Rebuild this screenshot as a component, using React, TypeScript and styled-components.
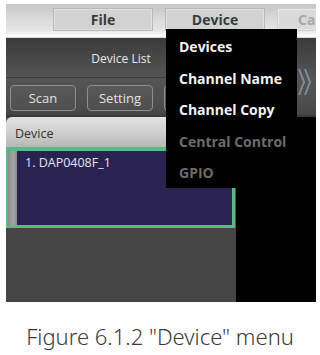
import React from "react";
import styled, { createGlobalStyle } from "styled-components";

const Global = createGlobalStyle`
  html, body { margin: 0; padding: 0; background: #ffffff; }
  body { font-family: "Open Sans", "Noto Sans", sans-serif; }
`;

const Page = styled.div`
  width: 320px;
  height: 355px;
  display: flex;
  flex-direction: column;
  align-items: flex-start;
`;

const Frame = styled.div`
  position: relative;
  margin: 4px 0 0 6px;
  width: 310px;
  height: 298px;
  overflow: hidden;
  display: flex;
  flex-direction: column;
  background: #000;
`;

const MenuBar = styled.div`
  height: 34px;
  flex: none;
  display: flex;
  align-items: flex-start;
  gap: 12px;
  padding: 4px 0 0 47px;
  box-sizing: border-box;
  background: linear-gradient(#c6c6c6 0%, #d8d8d8 40%, #e6e6e6 78%, #f6f6f6 90%, #ffffff 95%, #c8c8c8 100%);
`;

const MenuButton = styled.div<{ $dim?: boolean }>`
  flex: none;
  width: 100px;
  height: 23px;
  box-sizing: border-box;
  border: 1.5px solid ${(p) => (p.$dim ? "#cfcfcf" : "#b9b9b9")};
  background: ${(p) => (p.$dim ? "#dadada" : "#d2d2d2")};
  box-shadow: inset 0 0 0 1px rgba(255,255,255,0.35);
  display: flex;
  align-items: center;
  justify-content: ${(p) => (p.$dim ? "flex-start" : "center")};
  padding-left: ${(p) => (p.$dim ? "20px" : "0")};
  font-family: "Open Sans", sans-serif;
  font-weight: 700;
  font-size: 14px;
  color: ${(p) => (p.$dim ? "#a8a8a8" : "#3a3a3a")};
`;

const TopDark = styled.div`
  flex: none;
  display: grid;
  grid-template-columns: 230px 1fr;
  grid-template-rows: 40px 39px;
  background: linear-gradient(#3b3b3b 0%, #4a4a4a 30%, #555555 50%, #505050 75%, #474747 96%, #333 100%);
`;

const PanelTitle = styled.div`
  grid-column: 1;
  grid-row: 1;
  display: flex;
  align-items: center;
  justify-content: center;
  padding-top: 2px;
  font-family: "Open Sans", sans-serif;
  font-size: 12px;
  color: #e8e8e8;
  border-bottom: 1px solid #3c3c3c;
  box-sizing: border-box;
`;

const Toolbar = styled.div`
  grid-column: 1;
  grid-row: 2;
  display: flex;
  align-items: flex-start;
  gap: 11px;
  padding: 7px 0 0 4px;
`;

const ToolButton = styled.div`
  flex: none;
  width: 66px;
  height: 26px;
  box-sizing: border-box;
  border: 1.5px solid #8e8e8e;
  border-radius: 4px;
  background: linear-gradient(#5a5a5a, #4e4e4e);
  display: flex;
  align-items: center;
  justify-content: center;
  font-family: "Open Sans", sans-serif;
  font-size: 13px;
  color: #e2e2e2;
`;

const ChevronCell = styled.div`
  grid-column: 2;
  grid-row: 1 / span 2;
  display: flex;
  align-items: center;
  padding: 8px 0 0 62px;
`;

const Lower = styled.div`
  flex: 1;
  display: grid;
  grid-template-columns: 230px 1fr;
`;

const LeftColumn = styled.div`
  display: flex;
  flex-direction: column;
  background: #454545;
`;

const BlackColumn = styled.div`
  background: #000;
`;

const ListHeader = styled.div`
  height: 30px;
  flex: none;
  box-sizing: border-box;
  border-top-left-radius: 6px;
  background: linear-gradient(#e2e2e2, #cfcfcf 50%, #b8b8b8);
  display: flex;
  align-items: center;
  padding: 2px 0 0 9px;
  font-family: "Open Sans", sans-serif;
  font-size: 12.5px;
  color: #333;
`;

const DeviceItem = styled.div`
  height: 81px;
  flex: none;
  box-sizing: border-box;
  margin-right: 1px;
  display: flex;
  border: 3px solid #58bb84;
  border-top-width: 4px;
  border-left-width: 2px;
  background: #2a2352;
  box-shadow: 0 1px 2px rgba(90, 200, 140, 0.5);
`;

const SelectStrip = styled.div`
  width: 9px;
  flex: none;
  background: linear-gradient(90deg, #8c8c8c, #a6a6a6 60%, #8a8a8a);
`;

const DeviceName = styled.div`
  padding: 4px 0 0 8px;
  font-family: "Open Sans", sans-serif;
  font-size: 12.5px;
  line-height: 16px;
  color: #e4e4ee;
`;

const Rest = styled.div`
  flex: 1;
  background: #464646;
`;

const Dropdown = styled.div`
  position: absolute;
  left: 160px;
  top: 25px;
  width: 131px;
  height: 159px;
  box-sizing: border-box;
  padding-top: 2px;
  background: #000;
  display: flex;
  flex-direction: column;
`;

const DropItem = styled.div<{ $disabled?: boolean }>`
  height: 31.5px;
  flex: none;
  display: flex;
  align-items: center;
  padding-left: 13px;
  font-family: "Open Sans", sans-serif;
  font-weight: 700;
  font-size: 14px;
  color: ${(p) => (p.$disabled ? "#6c6c6c" : "#f2f2f2")};
  white-space: nowrap;
`;

const Caption = styled.div`
  width: 320px;
  margin-top: 21px;
  text-align: center;
  font-family: "Noto Sans", sans-serif;
  font-weight: 300;
  font-size: 22px;
  line-height: 26px;
  color: #3a3a3a;
`;

const Chevron = () => (
  <svg width="14" height="28" viewBox="0 0 14 28">
    <polyline points="1,1 6,14 1,27" fill="none" stroke="#7e8c98" strokeWidth="2" />
    <polyline points="7,1 12,14 7,27" fill="none" stroke="#7e8c98" strokeWidth="2" />
  </svg>
);

export default function App() {
  return (
    <Page>
      <Global />
      <Frame>
        <MenuBar>
          <MenuButton>File</MenuButton>
          <MenuButton>Device</MenuButton>
          <MenuButton $dim>Ca</MenuButton>
        </MenuBar>
        <TopDark>
          <PanelTitle>Device List</PanelTitle>
          <Toolbar>
            <ToolButton>Scan</ToolButton>
            <ToolButton>Setting</ToolButton>
            <ToolButton />
          </Toolbar>
          <ChevronCell>
            <Chevron />
          </ChevronCell>
        </TopDark>
        <Lower>
          <LeftColumn>
            <ListHeader>Device</ListHeader>
            <DeviceItem>
              <SelectStrip />
              <DeviceName>1. DAP0408F_1</DeviceName>
            </DeviceItem>
            <Rest />
          </LeftColumn>
          <BlackColumn />
        </Lower>
        <Dropdown>
          <DropItem>Devices</DropItem>
          <DropItem>Channel Name</DropItem>
          <DropItem>Channel Copy</DropItem>
          <DropItem $disabled>Central Control</DropItem>
          <DropItem $disabled>GPIO</DropItem>
        </Dropdown>
      </Frame>
      <Caption>Figure 6.1.2 "Device" menu</Caption>
    </Page>
  );
}
